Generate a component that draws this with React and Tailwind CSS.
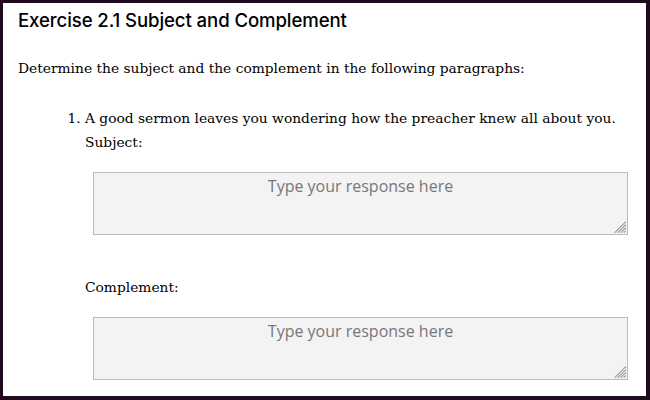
function Grip() {
  return (
    <svg className="absolute right-[2px] bottom-[2px] pointer-events-none" width="12" height="12" viewBox="0 0 12 12">
      <g stroke="#9a9a9a" strokeWidth="1.1" strokeLinecap="square">
        <line x1="1" y1="11.5" x2="11.5" y2="1" />
        <line x1="4" y1="11.5" x2="11.5" y2="4" />
        <line x1="7" y1="11.5" x2="11.5" y2="7" />
        <line x1="10" y1="11.5" x2="11.5" y2="10" />
      </g>
    </svg>
  );
}

function Response() {
  return (
    <div className="relative mt-[18px] ml-[8px] w-[535px] h-[63px]">
      <textarea
        placeholder="Type your response here"
        className="block w-full h-full box-border bg-[#f3f3f3] border border-solid border-[#bbbbbb] text-center font-['Open_Sans',sans-serif] text-[16px] leading-[24px] pt-[1px] placeholder:text-[#777777] resize-none outline-none"
      />
      <Grip />
    </div>
  );
}

export default function App() {
  return (
    <div className="w-[650px] h-[400px] box-border bg-white border-solid border-[#1f0a1f] border-l-[3px] border-t-[3px] border-r-[4px] border-b-[4px] overflow-hidden">
      <div className="pl-[15px] pt-[6px]">
        <h1 className="font-['Inter',sans-serif] text-[18.6px] font-medium leading-[1.2] text-black m-0 tracking-[-0.1px]">
          Exercise 2.1 Subject and Complement
        </h1>
        <p className="font-['DejaVu_Serif',serif] text-[13.8px] leading-[24px] text-black mt-[25px]">
          Determine the subject and the complement in the following paragraphs:
        </p>
        <ol className="font-['DejaVu_Serif',serif] text-[13.8px] leading-[24px] text-black mt-[26px] pl-[67px] list-decimal">
          <li className="pl-0">
            <div>A good sermon leaves you wondering how the preacher knew all about you.</div>
            <div>Subject:</div>
            <Response />
            <div className="mt-[40px]">Complement:</div>
            <Response />
          </li>
        </ol>
      </div>
    </div>
  );
}
